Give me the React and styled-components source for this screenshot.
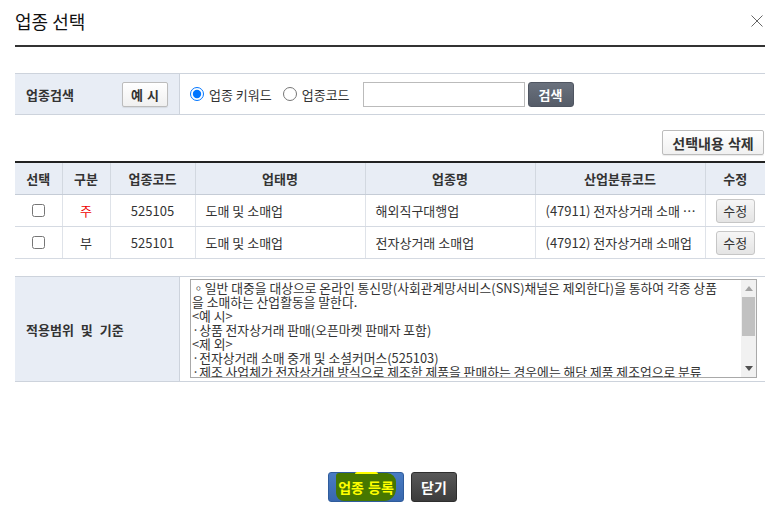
import styled, { createGlobalStyle } from 'styled-components';

const GlobalStyle = createGlobalStyle`
	body {
		margin: 0;
		background: #fff;
		font-family: 'Noto Sans CJK KR', 'Noto Sans', sans-serif;
		color: #333;
	}
`;

const rows = [
	{ kind: '주', code: '525105', biz: '도매 및 소매업', name: '해외직구대행업', ksic: '(47911) 전자상거래 소매 중개업', main: true },
	{ kind: '부', code: '525101', biz: '도매 및 소매업', name: '전자상거래 소매업', ksic: '(47912) 전자상거래 소매업' },
];

const scope = [
	'◦일반 대중을 대상으로 온라인 통신망(사회관계망서비스(SNS)채널은 제외한다)을 통하여 각종 상품',
	'을 소매하는 산업활동을 말한다.',
	'<예 시>',
	'·상품 전자상거래 판매(오픈마켓 판매자 포함)',
	'<제 외>',
	'·전자상거래 소매 중개 및 소셜커머스(525103)',
	'·제조 사업체가 전자상거래 방식으로 제조한 제품을 판매하는 경우에는 해당 제품 제조업으로 분류',
	'·해외직구 대행 서비스(525105)',
	'·통신판매 중개업(525103)',
	'·오픈마켓 운영업(525103)',
].join('\n');

const Page = styled.div`
	width: 750px;
	padding-left: 15px;
`;

const Header = styled.div`
	height: 45px;
	display: flex;
	align-items: center;
	justify-content: space-between;
	border-bottom: 2px solid #333;
`;

const Title = styled.h1`
	margin: 0 0 3px;
	font-size: 18px;
	font-weight: 400;
	line-height: 1;
	color: #111;
`;

const CloseButton = styled.button`
	border: 0;
	background: none;
	padding: 0;
	margin: 0 2px 3px 0;
	width: 12px;
	height: 12px;
	display: flex;
`;

const SearchRow = styled.div`
	margin-top: 26px;
	display: flex;
	height: 40px;
	border-top: 1px solid #cdd3dc;
	border-bottom: 1px solid #cdd3dc;
`;

const LabelCell = styled.div`
	width: 165px;
	flex: none;
	box-sizing: border-box;
	background: #e8edf5;
	border-right: 1px solid #cdd3dc;
	display: flex;
	align-items: center;
	justify-content: space-between;
	padding: 0 11px;
	font-size: 13px;
	font-weight: 700;
	word-spacing: 4px;
`;

const SearchCell = styled.div`
	flex: 1;
	display: flex;
	align-items: center;
	padding-left: 10px;
	font-size: 13px;
`;

const RadioLabel = styled.label`
	display: flex;
	align-items: center;
	margin-right: ${(p) => p.$gap}px;
	white-space: nowrap;

	input {
		margin: 0 5px 0 0;
		width: 14px;
		height: 14px;
	}
`;

const TextInput = styled.input`
	width: 162px;
	height: 25px;
	box-sizing: border-box;
	border: 1px solid #bbb;
	margin: 0 3px 0 0;
`;

const GrayButton = styled.button`
	height: 25px;
	padding: 0;
	width: ${(p) => p.$w}px;
	box-sizing: border-box;
	border: 1px solid #bcbcbc;
	border-radius: 2px;
	background: linear-gradient(#ffffff, #f0f0f0);
	font-family: inherit;
	font-size: ${(p) => p.$size || 13}px;
	font-weight: 700;
	color: #333;
	line-height: 1;
	word-spacing: ${(p) => p.$spacing || 0}px;
	box-shadow: 0 1px 1px rgba(0, 0, 0, 0.08);
`;

const DarkButton = styled.button`
	height: 25px;
	width: 46px;
	padding: 0;
	border: 1px solid #4f5561;
	border-radius: 3px;
	background: linear-gradient(#6a717d, #555c68);
	color: #fff;
	font-family: inherit;
	font-size: 13px;
	font-weight: 700;
	line-height: 1;
`;

const ToolRow = styled.div`
	margin-top: 15px;
	display: flex;
	justify-content: flex-end;
	padding-right: 1px;
`;

const Grid = styled.table`
	margin-top: 6px;
	width: 750px;
	border-collapse: collapse;
	table-layout: fixed;
	border-top: 2px solid #222;
	font-size: 13px;
`;

const Th = styled.th`
	height: 31px;
	padding: 0;
	background: #e8edf5;
	border-bottom: 1px solid #c5ccd6;
	border-left: 1px solid #d2d8e0;
	font-weight: 700;
	color: #333;
	&:first-child {
		border-left: 0;
	}
`;

const Td = styled.td`
	height: 31px;
	padding: 0 ${(p) => (p.$left ? `${p.$tight ? 3 : 10}px 0 10px` : '0')};
	border-bottom: 1px solid #d5dae2;
	border-left: 1px solid #dfe3e9;
	text-align: ${(p) => (p.$left ? 'left' : 'center')};
	color: ${(p) => (p.$red ? '#e00' : '#333')};
	white-space: nowrap;
	overflow: hidden;
	text-overflow: ellipsis;
	&:first-child {
		border-left: 0;
	}

	input {
		margin: 3px 0 0;
		width: 13px;
		height: 13px;
	}
`;

const EditButton = styled.button`
	width: 39px;
	height: 24px;
	padding: 0;
	border: 1px solid #c6c6c6;
	border-radius: 3px;
	background: linear-gradient(#f6f6f6, #e4e4e4);
	font-family: inherit;
	font-size: 13px;
	color: #333;
	line-height: 1;
`;

const InfoRow = styled.div`
	margin-top: 17px;
	display: flex;
	border-top: 1px solid #cdd3dc;
	border-bottom: 1px solid #cdd3dc;
`;

const InfoCell = styled.div`
	flex: 1;
	padding: 2px 8px 3px 10px;
`;

const ScopeBox = styled.div`
	display: flex;
	height: 99px;
	box-sizing: border-box;
	border: 1px solid #a9a9a9;
`;

const ScopeText = styled.textarea`
	flex: 1;
	min-width: 0;
	margin: 0;
	padding: 1px;
	border: 0;
	outline: none;
	font-family: inherit;
	font-size: 12.8px;
	line-height: 14px;
	color: #333;
	resize: none;
	white-space: pre-wrap;
	overflow: hidden;
`;

const ScrollBar = styled.div`
	width: 15px;
	flex: none;
	display: flex;
	flex-direction: column;
	background: #f1f1f1;
`;

const ScrollArrow = styled.div`
	height: 17px;
	display: flex;
	align-items: center;
	justify-content: center;
`;

const ScrollTrack = styled.div`
	flex: 1;
	padding: 0 1px;
`;

const ScrollThumb = styled.div`
	height: 39px;
	background: #c1c1c1;
`;

const Footer = styled.div`
	margin-top: 90px;
	display: flex;
	justify-content: center;
	gap: 7px;
	padding-left: 5px;
`;

const PrimaryButton = styled.button`
	width: 76px;
	height: 30px;
	padding: 0;
	border: 1px solid #2f5c9c;
	border-radius: 3px;
	background: linear-gradient(#4a7cc3, #3867ad);
	display: flex;
	align-items: stretch;
	justify-content: center;
	font-family: inherit;
	font-size: 14px;
	font-weight: 700;
	color: #ffff00;
`;

const Highlight = styled.span`
	position: relative;
	display: flex;
	align-items: center;
	padding: 0 2px;
	background: #467700;
	border-radius: 3px 9px 12px 8px;
	word-spacing: 1px;

	&::before {
		content: '';
		position: absolute;
		top: -1px;
		left: 19px;
		width: 23px;
		height: 2px;
		background: #ffff00;
		border-radius: 2px 2px 0 0;
	}
`;

const CloseDialogButton = styled.button`
	width: 46px;
	height: 30px;
	padding: 0;
	border: 1px solid #2e2e2e;
	border-radius: 3px;
	background: linear-gradient(#585858, #3c3c3c);
	font-family: inherit;
	font-size: 14px;
	font-weight: 700;
	color: #fff;
	line-height: 1;
`;

export default function App() {
	return (
		<Page>
			<GlobalStyle />
			<Header>
				<Title>업종 선택</Title>
				<CloseButton aria-label="닫기">
					<svg width="12" height="12" viewBox="0 0 12 12">
						<path d="M0.5 0.5L11.5 11.5M11.5 0.5L0.5 11.5" stroke="#666" strokeWidth="1" fill="none" />
					</svg>
				</CloseButton>
			</Header>

			<SearchRow>
				<LabelCell>
					업종검색
					<GrayButton $w={46} $spacing={1}>예 시</GrayButton>
				</LabelCell>
				<SearchCell>
					<RadioLabel $gap={11}>
						<input type="radio" name="mode" defaultChecked />
						업종 키워드
					</RadioLabel>
					<RadioLabel $gap={13}>
						<input type="radio" name="mode" />
						업종코드
					</RadioLabel>
					<TextInput type="text" />
					<DarkButton>검색</DarkButton>
				</SearchCell>
			</SearchRow>

			<ToolRow>
				<GrayButton $w={102} $size={14} $spacing={1}>선택내용 삭제</GrayButton>
			</ToolRow>

			<Grid>
				<colgroup>
					<col style={{ width: 47 }} />
					<col style={{ width: 48 }} />
					<col style={{ width: 85 }} />
					<col style={{ width: 170 }} />
					<col style={{ width: 170 }} />
					<col style={{ width: 170 }} />
					<col style={{ width: 60 }} />
				</colgroup>
				<thead>
					<tr>
						<Th>선택</Th>
						<Th>구분</Th>
						<Th>업종코드</Th>
						<Th>업태명</Th>
						<Th>업종명</Th>
						<Th>산업분류코드</Th>
						<Th>수정</Th>
					</tr>
				</thead>
				<tbody>
					{rows.map((r) => (
						<tr key={r.code}>
							<Td>
								<input type="checkbox" />
							</Td>
							<Td $red={r.main}>{r.kind}</Td>
							<Td>{r.code}</Td>
							<Td $left>{r.biz}</Td>
							<Td $left>{r.name}</Td>
							<Td $left $tight>
								{r.ksic}
							</Td>
							<Td>
								<EditButton>수정</EditButton>
							</Td>
						</tr>
					))}
				</tbody>
			</Grid>

			<InfoRow>
				<LabelCell>적용범위 및 기준</LabelCell>
				<InfoCell>
					<ScopeBox>
						<ScopeText readOnly value={scope} />
						<ScrollBar>
							<ScrollArrow>
								<svg width="8" height="5" viewBox="0 0 8 5">
									<polygon points="0,5 4,0 8,5" fill="#a3a3a3" />
								</svg>
							</ScrollArrow>
							<ScrollTrack>
								<ScrollThumb />
							</ScrollTrack>
							<ScrollArrow>
								<svg width="8" height="5" viewBox="0 0 8 5">
									<polygon points="0,0 8,0 4,5" fill="#505050" />
								</svg>
							</ScrollArrow>
						</ScrollBar>
					</ScopeBox>
				</InfoCell>
			</InfoRow>

			<Footer>
				<PrimaryButton>
					<Highlight>업종 등록</Highlight>
				</PrimaryButton>
				<CloseDialogButton>닫기</CloseDialogButton>
			</Footer>
		</Page>
	);
}
